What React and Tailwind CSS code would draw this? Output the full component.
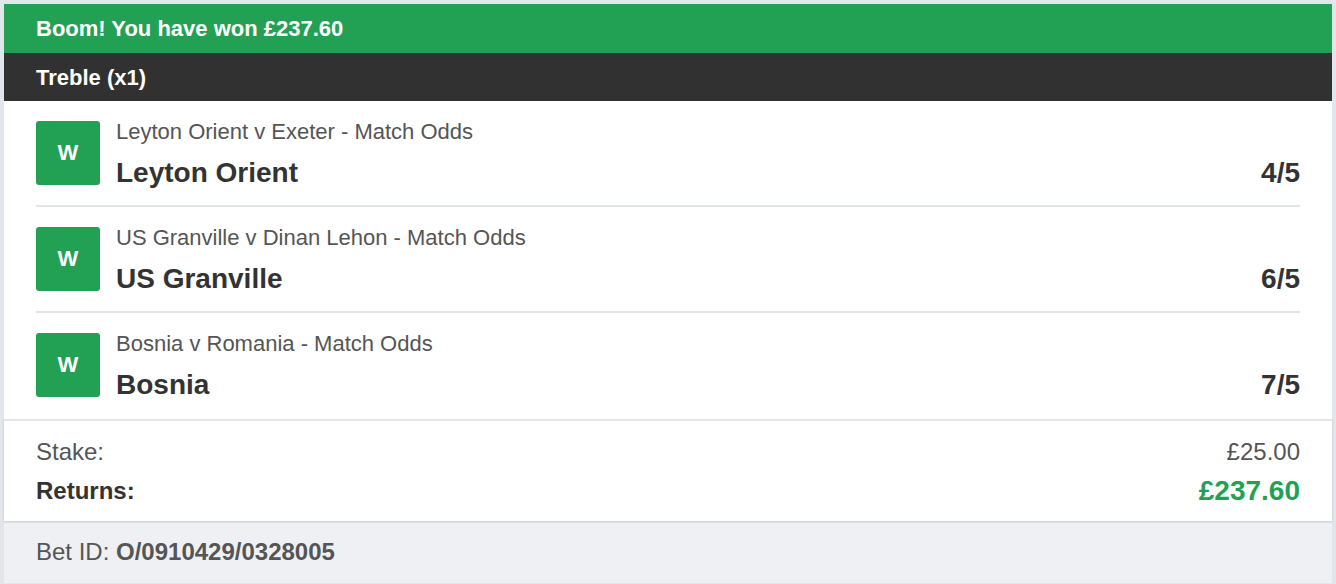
const legs = [
  { market: 'Leyton Orient v Exeter - Match Odds', pick: 'Leyton Orient', odds: '4/5' },
  { market: 'US Granville v Dinan Lehon - Match Odds', pick: 'US Granville', odds: '6/5' },
  { market: 'Bosnia v Romania - Match Odds', pick: 'Bosnia', odds: '7/5' },
]

function Leg({ leg, last }){
  return (
    <div className={last ? 'pt-5 pb-[22px]' : 'pt-5 pb-5 border-b-2 border-[#e2e5e9]'}>
      <div className="flex items-start gap-4 h-16">
        <div className="w-16 h-16 rounded-[3px] bg-[#22a155] flex items-center justify-center text-white font-bold text-[22px] leading-none shrink-0">W</div>
        <div className="flex-1 min-w-0 pt-px">
          <div className="text-[22px] leading-[20px] text-[#555]">{leg.market}</div>
          <div className="mt-[15px] flex items-center justify-between text-[28px] leading-[32px] font-bold text-[#333]">
            <span>{leg.pick}</span>
            <span>{leg.odds}</span>
          </div>
        </div>
      </div>
    </div>
  )
}

export default function App(){
  return (
    <div className="min-h-screen bg-[#e2e5ea] p-1" style={{ fontFamily: '"Liberation Sans", Arial, sans-serif' }}>
      <div className="bg-white">
        <div className="bg-[#22a155] h-[49px] px-8 flex items-center text-white font-bold text-[22px]">Boom! You have won £237.60</div>
        <div className="bg-[#313131] h-[48px] px-8 flex items-center text-white font-bold text-[22px]">Treble (x1)</div>
        <div className="px-8">
          {legs.map((l, i)=> <Leg key={i} leg={l} last={i===legs.length-1} />)}
        </div>
        <div className="border-t-2 border-[#e2e5e9] px-8 pt-4 pb-3 shadow-[0_1px_2px_rgba(0,0,0,0.18)] relative">
          <div className="flex items-center justify-between text-[24px] leading-[30px] text-[#555]">
            <span>Stake:</span>
            <span>£25.00</span>
          </div>
          <div className="mt-[6px] flex items-center justify-between leading-[36px]">
            <span className="text-[24px] font-bold text-[#333]">Returns:</span>
            <span className="text-[28px] font-bold text-[#22a155]">£237.60</span>
          </div>
        </div>
        <div className="bg-[#eef0f4] px-8 py-4 text-[24px] leading-[30px] text-[#555]">
          Bet ID: <span className="font-bold">O/0910429/0328005</span>
        </div>
      </div>
    </div>
  )
}
